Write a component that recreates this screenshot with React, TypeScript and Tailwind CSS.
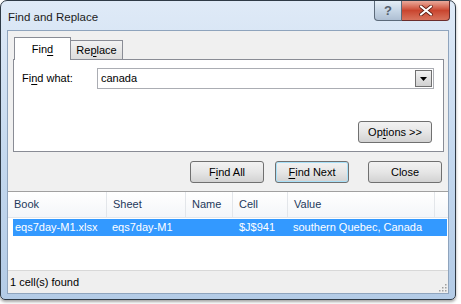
const FONT = { fontFamily: '"Liberation Sans", Arial, sans-serif' };

const btn =
  'flex items-center justify-center h-[22px] w-[74px] rounded-[3px] border border-[#707070] bg-gradient-to-b from-[#f2f2f2] via-[#e6e6e6] to-[#d2d2d2] text-[11px] text-black';

function U({ children }: { children: string }) {
  return <span className="underline underline-offset-2">{children}</span>;
}

const columns = [
  { name: 'Book', w: 'w-[99px]' },
  { name: 'Sheet', w: 'w-[79px]' },
  { name: 'Name', w: 'w-[47px]' },
  { name: 'Cell', w: 'w-[55px]' },
  { name: 'Value', w: 'w-[147px]' },
];

export default function App() {
  return (
    <div className="w-[461px] h-[304px] bg-white overflow-hidden" style={FONT}>
      <div className="w-[456px] h-[300px] rounded-t-[7px] rounded-b-[5px] border border-[#2f3a46] bg-gradient-to-b from-[#dfeaf7] via-[#c5d9ef] to-[#b3cbe6] flex flex-col px-[6px] pb-[5px] shadow-[0_2px_3px_rgba(0,0,0,0.35)]">
        {/* title bar */}
        <div className="h-[29px] flex items-start shrink-0">
          <span className="mt-[8px] ml-[1px] text-[11.5px] text-[#1b1b1b]">Find and Replace</span>
          <div className="ml-auto mr-[-1px] flex">
            <div className="w-[28px] h-[20px] rounded-bl-[4px] border border-t-0 border-[#5c6a7a] bg-gradient-to-b from-[#e4edf6] via-[#c7d6e6] to-[#aebfd3] flex items-center justify-center text-[13px] font-bold text-[#55606c]">
              ?
            </div>
            <div className="w-[48px] h-[20px] rounded-br-[4px] border border-t-0 border-l-0 border-[#6a2d2d] bg-gradient-to-b from-[#e9a99b] via-[#c9452f] to-[#d8725c] flex items-center justify-center">
              <svg width="14" height="11" viewBox="0 0 14 11">
                <path d="M2 1.5 L12 9.5 M12 1.5 L2 9.5" stroke="#5a1a10" strokeWidth="3.6" strokeLinecap="round" />
                <path d="M2 1.5 L12 9.5 M12 1.5 L2 9.5" stroke="#ffffff" strokeWidth="2.2" strokeLinecap="round" />
              </svg>
            </div>
          </div>
        </div>

        {/* client */}
        <div className="flex-1 bg-[#f0f0f0] border border-[#8fa4bd] flex flex-col text-[11px] text-black">
          {/* tabs */}
          <div className="mt-[6px] ml-[6px] flex items-end h-[22px] shrink-0">
            <div className="relative z-10 -mb-px h-[23px] w-[57px] border border-b-0 border-[#898c95] bg-white flex items-center justify-center">
              Fin<U>d</U>
            </div>
            <div className="h-[19px] w-[52px] border border-b-0 border-l-0 border-[#898c95] bg-gradient-to-b from-[#f2f2f2] to-[#dcdcdc] flex items-center justify-center">
              Re<U>p</U>lace
            </div>
          </div>
          <div className="ml-[5px] mr-[4px] h-[93px] border border-[#898c95] bg-white flex flex-col shrink-0">
            <div className="mt-[8px] flex items-center">
              <span className="ml-[8px] w-[75px]">
                Fi<U>n</U>d what:
              </span>
              <div className="w-[337px] h-[21px] border border-[#abadb3] bg-white flex items-center justify-between">
                <span className="ml-[3px]">canada</span>
                <div className="mr-px w-[17px] h-[17px] border border-[#707070] bg-gradient-to-b from-[#f2f2f2] to-[#d0d0d0] flex items-center justify-center">
                  <svg width="7" height="4" viewBox="0 0 7 4">
                    <path d="M0 0 H7 L3.5 4 Z" fill="#000" />
                  </svg>
                </div>
              </div>
            </div>
            <div className="mt-auto mb-[8px] mr-[11px] self-end">
              <div className={btn}>
                Op<U>t</U>ions &gt;&gt;
              </div>
            </div>
          </div>

          {/* action buttons */}
          <div className="mt-[9px] mr-[6px] flex justify-end shrink-0">
            <div className={btn}>
              F<U>i</U>nd All
            </div>
            <div className={btn + ' ml-[11px] border-[#3c8fd6] shadow-[inset_0_0_0_1px_#a8e0f8]'}>
              <U>F</U>ind Next
            </div>
            <div className={btn + ' ml-[19px]'}>Close</div>
          </div>

          {/* results list */}
          <div className="mt-[8px] flex-1 bg-white border-t border-[#a0a0a0] flex flex-col">
            <div className="h-[26px] flex bg-gradient-to-b from-white to-[#f4f6f9] border-b border-[#e3e6ea] text-[#1e395b]">
              {columns.map((c) => (
                <div key={c.name} className={c.w + ' border-r border-[#e3e6ea] flex items-center pl-[6px]'}>
                  {c.name}
                </div>
              ))}
            </div>
            <div className="mt-px ml-[5px] mr-px h-[17px] flex bg-[#3399ff] text-white items-center">
              <div className="w-[93px] pl-[2px]">eqs7day-M1.xlsx</div>
              <div className="w-[79px] pl-[6px]">eqs7day-M1</div>
              <div className="w-[47px]" />
              <div className="w-[55px] pl-[7px]">$J$941</div>
              <div className="pl-[6px]">southern Quebec, Canada</div>
            </div>
          </div>
          <div className="h-[23px] bg-[#efefef] border-t border-[#d8d8d8] flex items-center relative shrink-0">
            <span className="ml-[2px]">1 cell(s) found</span>
            <svg className="absolute right-[1px] bottom-[1px]" width="10" height="10" viewBox="0 0 10 10">
              {[
                [8, 2],
                [8, 5],
                [5, 5],
                [8, 8],
                [5, 8],
                [2, 8],
              ].map(([x, y]) => (
                <rect key={x + '-' + y} x={x} y={y} width="1.5" height="1.5" fill="#a0a0a0" />
              ))}
            </svg>
          </div>
        </div>
      </div>
    </div>
  );
}
